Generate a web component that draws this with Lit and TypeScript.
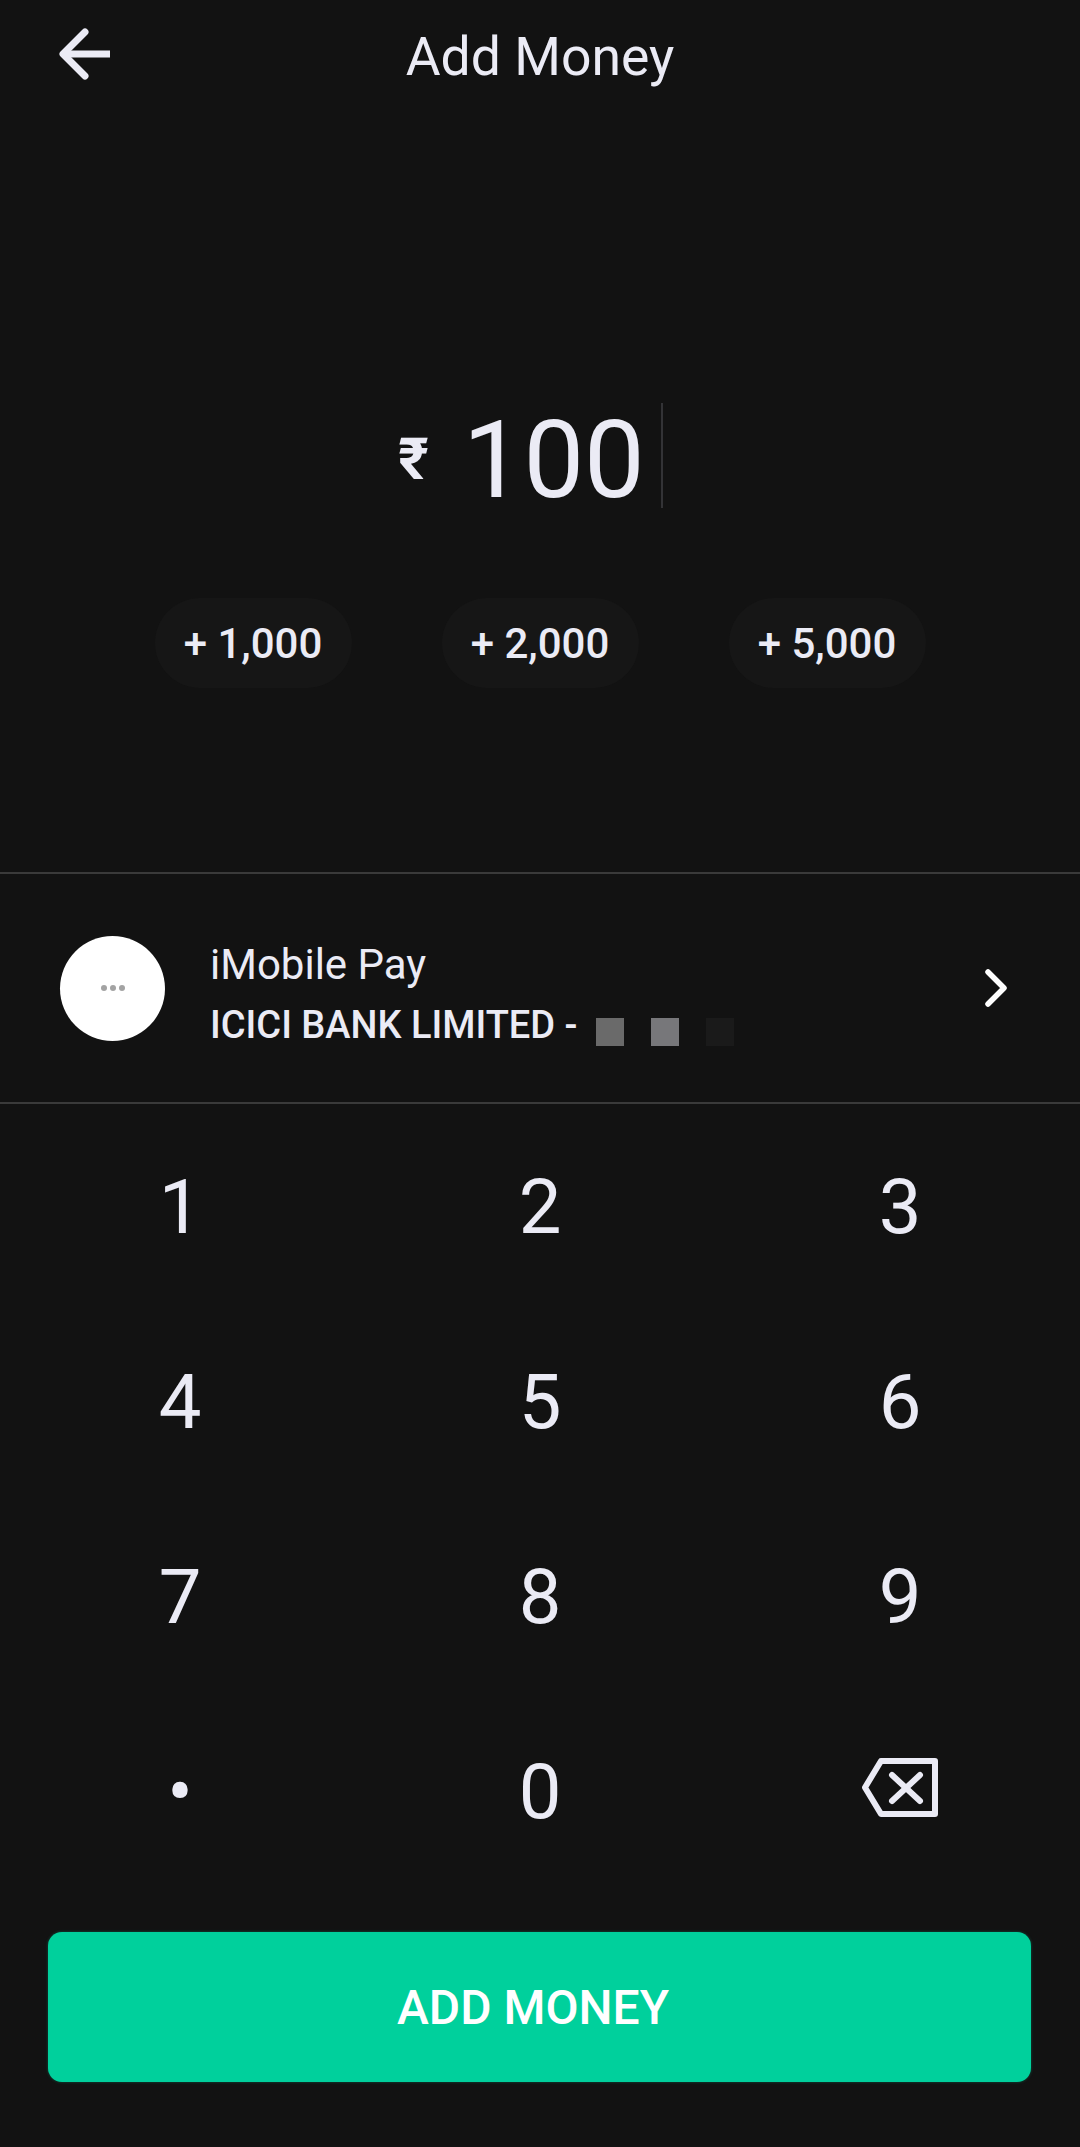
import { LitElement, css, html } from "lit";
import { customElement } from "lit/decorators.js";

const KEYS = ["1", "2", "3", "4", "5", "6", "7", "8", "9", "•", "0"];
const CHIPS = ["+ 1,000", "+ 2,000", "+ 5,000"];

@customElement("app-root")
export class AppRoot extends LitElement {
  static styles = css`
    :host {
      display: flex;
      flex-direction: column;
      width: 1080px;
      height: 2147px;
      background: #121212;
      color: #ebebf5;
      font-family: Roboto, "Noto Sans", sans-serif;
      overflow: hidden;
    }

    .header {
      position: relative;
      height: 112px;
      display: flex;
      align-items: center;
      justify-content: center;
      flex: none;
    }
    .back {
      position: absolute;
      left: 58px;
      top: 28px;
      width: 54px;
      height: 54px;
    }
    .title {
      font-size: 53.5px;
      line-height: 112px;
      padding-top: 1px;
      font-weight: 400;
    }

    .amount-area {
      height: 760px;
      flex: none;
      display: flex;
      flex-direction: column;
      align-items: center;
    }
    .amount {
      margin-top: 291px;
      height: 105px;
      display: flex;
      align-items: center;
      margin-left: -19px;
    }
    .rupee {
      font-size: 58px;
      font-weight: 700;
      line-height: 58px;
      margin-right: 34px;
      margin-top: 6px;
    }
    .value {
      font-size: 108px;
      font-weight: 400;
      line-height: 105px;
      margin-top: 10px;
    }
    .caret {
      width: 2px;
      height: 105px;
      background: #333336;
      margin-left: 16px;
    }
    .chips {
      margin-top: 90px;
      display: flex;
      gap: 90px;
    }
    .chip {
      width: 197px;
      height: 90px;
      border-radius: 45px;
      background: #161616;
      display: flex;
      align-items: center;
      justify-content: center;
      font-size: 42px;
      font-weight: 500;
    }

    .pay {
      height: 228px;
      flex: none;
      border-top: 2px solid #3a3a3a;
      border-bottom: 2px solid #3a3a3a;
      display: flex;
      align-items: center;
      padding: 0 70px 0 60px;
    }
    .logo {
      width: 105px;
      height: 105px;
      border-radius: 50%;
      background: #fff;
      flex: none;
      display: flex;
      align-items: center;
      justify-content: center;
      gap: 3px;
    }
    .logo i {
      width: 6px;
      height: 6px;
      border-radius: 50%;
      background: #a3a3a3;
    }
    .pay-text {
      margin-left: 45px;
      flex: 1;
      padding-top: 12px;
    }
    .bank-app {
      font-size: 42px;
      line-height: 47px;
      font-weight: 400;
    }
    .account {
      margin-top: 15px;
      display: flex;
      align-items: center;
      font-size: 38px;
      line-height: 44px;
      font-weight: 500;
    }
    .mask {
      display: flex;
      gap: 27px;
      margin-left: 19px;
      margin-top: 13px;
    }
    .mask i {
      width: 28px;
      height: 28px;
    }
    .chevron {
      width: 26px;
      height: 38px;
      flex: none;
    }

    .keypad {
      display: grid;
      grid-template-columns: repeat(3, 360px);
      grid-auto-rows: 195px;
      flex: none;
    }
    .key {
      display: flex;
      align-items: center;
      justify-content: center;
      font-size: 76px;
      font-weight: 400;
      padding-top: 10px;
      box-sizing: border-box;
    }
    .key.icon {
      padding-top: 2px;
    }
    .backspace {
      width: 78px;
      height: 62px;
    }

    .cta {
      margin: 48px 49px 0 48px;
      height: 150px;
      flex: none;
      border-radius: 14px;
      background: #00d09c;
      box-shadow: 0 0 3px rgba(0, 208, 156, 0.35);
      color: #fff;
      display: flex;
      align-items: center;
      justify-content: center;
      padding-right: 13px;
      font-size: 48px;
      font-weight: 500;
    }
  `;

  render() {
    return html`
      <div class="header">
        <svg class="back" viewBox="0 0 54 54" fill="none" stroke="#ebebf5" stroke-width="7" stroke-linejoin="round">
          <path d="M52 26H6" />
          <path d="M27 4 5 26l22 22" stroke-linecap="round" />
        </svg>
        <div class="title">Add Money</div>
      </div>

      <div class="amount-area">
        <div class="amount">
          <span class="rupee">₹</span>
          <span class="value">100</span>
          <span class="caret"></span>
        </div>
        <div class="chips">
          ${CHIPS.map((c) => html`<div class="chip">${c}</div>`)}
        </div>
      </div>

      <div class="pay">
        <div class="logo"><i></i><i></i><i></i></div>
        <div class="pay-text">
          <div class="bank-app">iMobile Pay</div>
          <div class="account">
            ICICI BANK LIMITED -
            <span class="mask">
              <i style="background:#6a6a6a"></i>
              <i style="background:#77777a"></i>
              <i style="background:#1a1a1a"></i>
            </span>
          </div>
        </div>
        <svg class="chevron" viewBox="0 0 26 38" fill="none" stroke="#fff" stroke-width="5.5" stroke-linecap="round" stroke-linejoin="round">
          <path d="M4 3 20 19 4 35" />
        </svg>
      </div>

      <div class="keypad">
        ${KEYS.map((k) => html`<div class="key">${k}</div>`)}
        <div class="key icon">
          <svg class="backspace" viewBox="0 0 78 62" fill="none" stroke="#ebebf5" stroke-width="6" stroke-linejoin="round" stroke-linecap="round">
            <path d="M20 4H74V57H20L4 30.5Z" />
            <path d="M31 18 59 44M59 18 31 44" />
          </svg>
        </div>
      </div>

      <div class="cta">ADD MONEY</div>
    `;
  }
}
